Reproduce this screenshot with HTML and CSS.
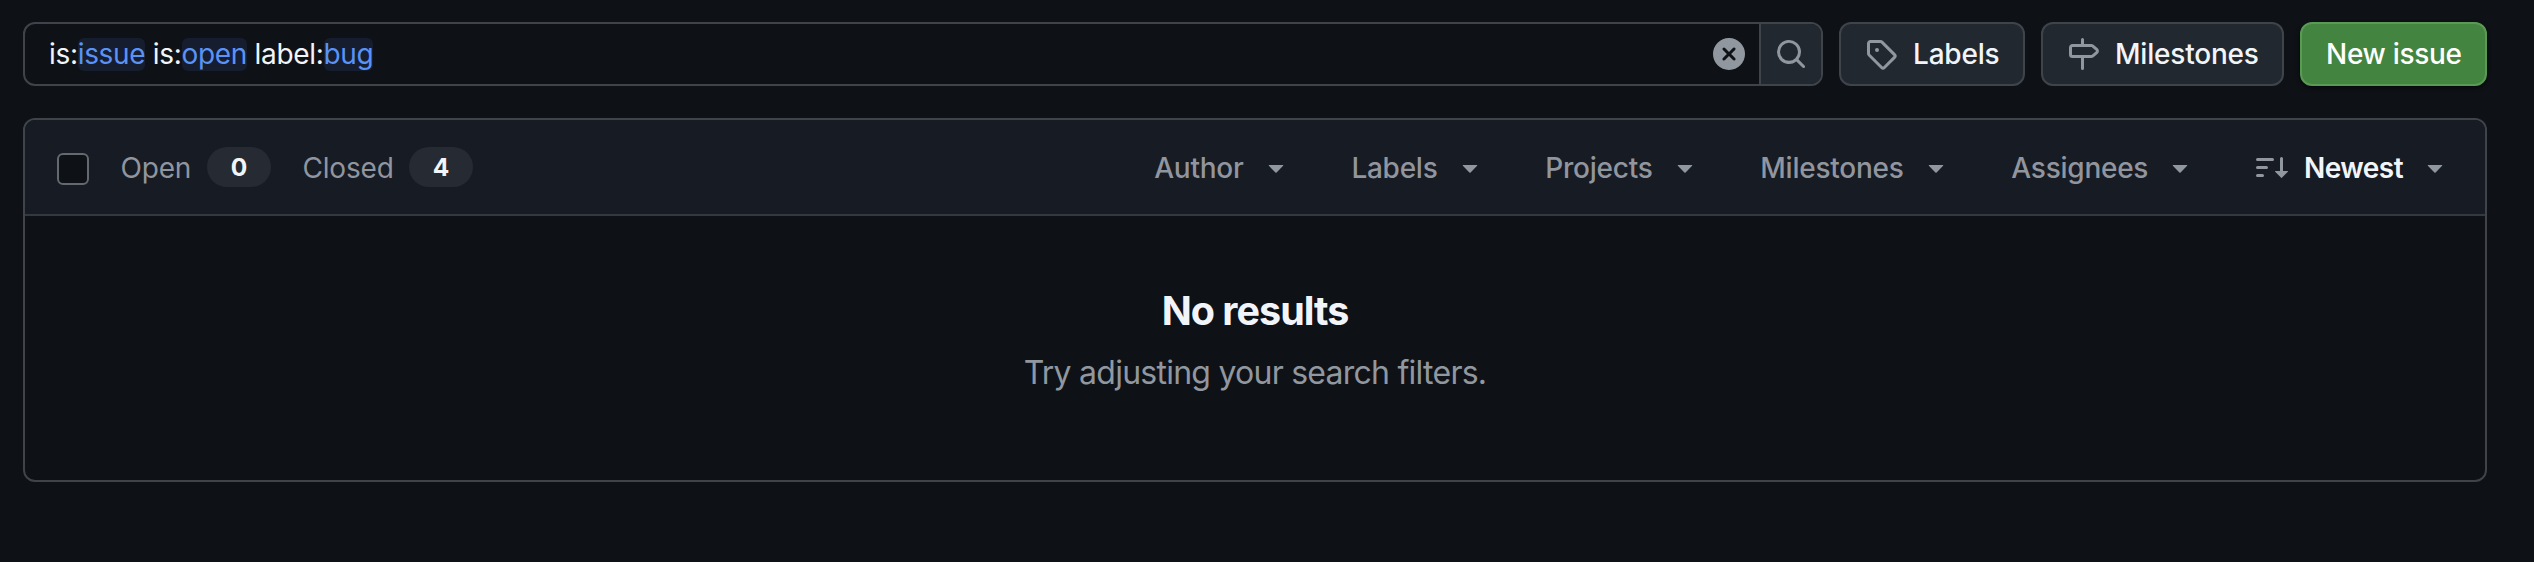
FILE: index.html
```html
<!DOCTYPE html>
<html lang="en">
<head>
<meta charset="utf-8">
<title>Issues</title>
<link rel="stylesheet" href="styles.css">
</head>
<body>
<svg class="sprite" aria-hidden="true">
  <symbol id="caret" viewBox="0 0 16 16"><path d="m4.427 7.427 3.396 3.396a.25.25 0 0 0 .354 0l3.396-3.396A.25.25 0 0 0 11.396 7H4.604a.25.25 0 0 0-.177.427Z"/></symbol>
</svg>
<main class="page">
  <div class="toolbar">
    <div class="search">
      <div class="query"><span>is:</span><span class="token">issue</span><span> is:</span><span class="token">open</span><span> label:</span><span class="token">bug</span></div>
      <svg class="icon clear" viewBox="0 0 16 16"><path d="M2.343 13.657A8 8 0 1 1 13.658 2.343 8 8 0 0 1 2.343 13.657ZM6.03 4.97a.751.751 0 0 0-1.042.018.751.751 0 0 0-.018 1.042L6.94 8 4.97 9.97a.749.749 0 0 0 .326 1.275.749.749 0 0 0 .734-.215L8 9.06l1.97 1.97a.749.749 0 0 0 1.275-.326.749.749 0 0 0-.215-.734L9.06 8l1.97-1.97a.749.749 0 0 0-.326-1.275.749.749 0 0 0-.734.215L8 6.94Z"/></svg>
      <button class="search-button" aria-label="Search"><svg class="icon" viewBox="0 0 16 16"><path d="M10.68 11.74a6 6 0 0 1-7.922-8.982 6 6 0 0 1 8.982 7.922l3.04 3.04a.749.749 0 0 1-.326 1.275.749.749 0 0 1-.734-.215ZM11.5 7a4.499 4.499 0 1 0-8.997 0A4.499 4.499 0 0 0 11.5 7Z"/></svg></button>
    </div>
    <button class="button labels"><svg class="icon" viewBox="0 0 16 16"><path d="M1 7.775V2.75C1 1.784 1.784 1 2.75 1h5.025c.464 0 .91.184 1.238.513l6.25 6.25a1.75 1.75 0 0 1 0 2.474l-5.026 5.026a1.75 1.75 0 0 1-2.474 0l-6.25-6.25A1.752 1.752 0 0 1 1 7.775Zm1.5 0c0 .066.026.13.073.177l6.25 6.25a.25.25 0 0 0 .354 0l5.025-5.025a.25.25 0 0 0 0-.354l-6.25-6.25a.25.25 0 0 0-.177-.073H2.75a.25.25 0 0 0-.25.25ZM6 5a1 1 0 1 1 0 2 1 1 0 0 1 0-2Z"/></svg><span>Labels</span></button>
    <button class="button milestones"><svg class="icon" viewBox="0 0 16 16"><path d="M7.75 0a.75.75 0 0 1 .75.75V3h3.634c.414 0 .814.147 1.13.414l2.07 1.75a1.75 1.75 0 0 1 0 2.672l-2.07 1.75a1.75 1.75 0 0 1-1.13.414H8.5v5.25a.75.75 0 0 1-1.5 0V10H2.75A1.75 1.75 0 0 1 1 8.25v-3.5C1 3.784 1.784 3 2.75 3H7V.75A.75.75 0 0 1 7.75 0Zm4.384 8.5a.25.25 0 0 0 .161-.06l2.07-1.75a.248.248 0 0 0 0-.38l-2.07-1.75a.25.25 0 0 0-.161-.06H2.75a.25.25 0 0 0-.25.25v3.5c0 .138.112.25.25.25h9.384Z"/></svg><span>Milestones</span></button>
    <button class="button primary">New issue</button>
  </div>

  <section class="panel">
    <header class="panel-header">
      <span class="checkbox" role="checkbox" aria-checked="false"></span>
      <a class="state open"><span class="name">Open</span><span class="count">0</span></a>
      <a class="state closed"><span class="name">Closed</span><span class="count">4</span></a>
      <nav class="filters">
        <button class="filter"><span class="name">Author</span><svg class="icon"><use href="#caret"/></svg></button>
        <button class="filter"><span class="name">Labels</span><svg class="icon"><use href="#caret"/></svg></button>
        <button class="filter"><span class="name">Projects</span><svg class="icon"><use href="#caret"/></svg></button>
        <button class="filter"><span class="name">Milestones</span><svg class="icon"><use href="#caret"/></svg></button>
        <button class="filter"><span class="name">Assignees</span><svg class="icon"><use href="#caret"/></svg></button>
        <button class="filter sort"><svg class="icon" viewBox="0 0 16 16"><path d="M0 4.25a.75.75 0 0 1 .75-.75h7.5a.75.75 0 0 1 0 1.5H.75A.75.75 0 0 1 0 4.25Zm0 4a.75.75 0 0 1 .75-.75h4.5a.75.75 0 0 1 0 1.5H.75A.75.75 0 0 1 0 8.25Zm0 4a.75.75 0 0 1 .75-.75h2.5a.75.75 0 0 1 0 1.5H.75a.75.75 0 0 1-.75-.75Z"/><path d="M13.5 10h2.25a.25.25 0 0 1 .177.427l-3 3a.25.25 0 0 1-.354 0l-3-3A.25.25 0 0 1 9.75 10H12V3.75a.75.75 0 0 1 1.5 0V10Z"/></svg><span class="name">Newest</span><svg class="icon"><use href="#caret"/></svg></button>
      </nav>
    </header>
    <div class="empty">
      <h2>No results</h2>
      <p>Try adjusting your search filters.</p>
    </div>
  </section>
</main>
</body>
</html>
```

FILE: styles.css
```css
* { box-sizing: border-box; }

body {
  margin: 0;
  min-height: 562px;
  background: #0e1116;
  color: #f1f5fa;
  font: 400 28px/40px Inter, "Liberation Sans", sans-serif;
}

button {
  margin: 0;
  padding: 0;
  border: 0;
  background: none;
  color: inherit;
  font: inherit;
}

.sprite { display: none; }

.page { padding: 22px 47px 0 23px; }

.icon {
  width: 32px;
  height: 32px;
  flex: none;
  display: block;
  fill: #91979f;
}

.toolbar {
  display: flex;
  gap: 16px;
  height: 64px;
}

.search {
  flex: 1;
  display: flex;
  align-items: center;
  border: 2px solid #3f444b;
  border-radius: 12px;
  overflow: hidden;
}

.query {
  flex: 1;
  display: flex;
  align-items: center;
  padding-left: 24px;
  white-space: pre;
  letter-spacing: -0.32px;
}

.query span { line-height: 33px; }

.token {
  border-radius: 6px;
  background: #151d2e;
  color: #5a93f5;
}

.clear { margin-right: 14px; }

.search-button {
  width: 62px;
  height: 60px;
  display: flex;
  align-items: center;
  justify-content: center;
  border-left: 2px solid #3f444b;
  background: #22282f;
}

.button {
  display: flex;
  align-items: center;
  gap: 16px;
  padding-left: 24px;
  border: 2px solid #3f444b;
  border-radius: 12px;
  background: #22282f;
  font-weight: 550;
  letter-spacing: -0.2px;
}

.labels { width: 186px; }
.milestones { width: 243px; }

.primary {
  width: 187px;
  border-color: #5a9a55;
  background: #438440;
  color: #fff;
  letter-spacing: -0.3px;
  box-shadow: 0 2px 4px rgba(1, 4, 9, 0.6);
}

.panel {
  height: 364px;
  margin-top: 32px;
  border: 2px solid #3f444b;
  border-radius: 12px;
  overflow: hidden;
}

.panel-header {
  display: flex;
  align-items: center;
  height: 96px;
  padding: 0 34px 0 32px;
  border-bottom: 2px solid #34393f;
  background: #171b23;
  color: #91959e;
}

.checkbox {
  width: 32px;
  height: 32px;
  margin: 4px 31px 0 0;
  border: 2px solid #646870;
  border-radius: 6px;
  background: #0e1116;
}

.name { padding-top: 1px; }

.state {
  display: flex;
  align-items: center;
  justify-content: space-between;
  letter-spacing: -0.2px;
}

.open { width: 151px; margin-right: 31px; }
.closed { width: 171px; }
.state .name { padding-left: 0.5px; }

.count {
  width: 64px;
  height: 40px;
  border-radius: 20px;
  background: #262a32;
  color: #f1f5fa;
  font-size: 24.5px;
  font-weight: 650;
  line-height: 41px;
  letter-spacing: 0;
  text-align: center;
}

.filters {
  display: flex;
  gap: 59.8px;
  margin-left: auto;
}

.filter {
  display: flex;
  align-items: center;
  gap: 16px;
  font-weight: 500;
  letter-spacing: -0.25px;
}

.sort { color: #f1f5fa; font-weight: 600; letter-spacing: -0.55px; }

.empty {
  padding-top: 69px;
  text-align: center;
}

.empty h2 {
  margin: 0;
  font-size: 39.5px;
  font-weight: 650;
  line-height: 52px;
  letter-spacing: -1px;
}

.empty p {
  margin: 12px 0 0;
  color: #91979f;
  font-size: 32px;
  line-height: 48px;
  letter-spacing: -0.75px;
}
```
